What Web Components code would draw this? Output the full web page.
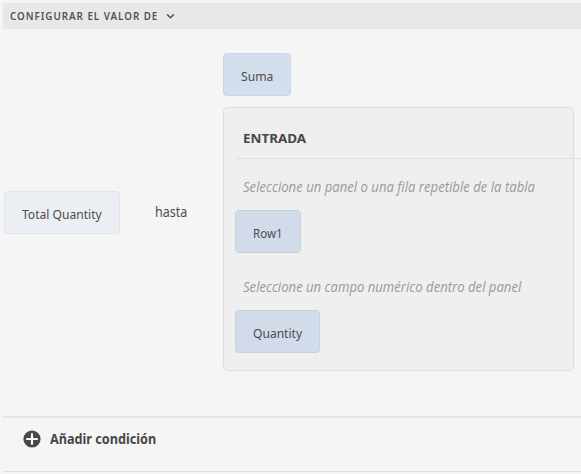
<!DOCTYPE html>
<html lang="es"><head><meta charset="utf-8"><title>Editor de reglas</title>
<style>html,body{margin:0;height:474px;overflow:hidden;background:#f5f5f5}</style></head>
<body><rule-editor></rule-editor>
<script>
const define = (name, html, after) => customElements.define(name, class extends HTMLElement {
  connectedCallback() {
    if (this.shadowRoot) return;
    this.attachShadow({mode: 'open'}).innerHTML = html;
    if (after) after(this);
  }
});

// A single line of text condensed to the given width.
define('fit-text', `<style>
:host{display:block;white-space:nowrap;flex:none}
span{display:inline-block;transform-origin:0 50%}</style><span><slot></slot></span>`, el => {
  const w = +el.getAttribute('width');
  el.style.width = w + 'px';
  const s = el.shadowRoot.querySelector('span');
  s.style.transform = `scaleX(${w / s.offsetWidth})`;
});

define('value-chip', `<style>
:host{display:flex;box-sizing:border-box;width:fit-content;height:43px;padding:3px 17px 0;align-items:center;
border:1px solid #c6d2e2;border-radius:4px;background:#d1dbea;color:#4c4c4e;font-size:13.3px;line-height:20px;flex:none}
:host([tone=function]){background:#d4dfee;border-color:#c9d6e6}
:host([tone=pale]){background:#ebeff4;border-color:#e0e5e9}</style><slot></slot>`);

define('rule-header', `<style>
:host{display:flex;box-sizing:border-box;margin-left:3px;height:26px;padding:0 0 1px 6.5px;align-items:center;background:#e8e8e8;
color:#535353;font-size:10px;font-weight:600;letter-spacing:1px;line-height:16px}
svg{margin-left:8px;margin-top:1px}</style>
<slot></slot><svg width="9" height="7" viewBox="0 0 9 7"><path d="M1.5 1.7 4.5 4.7 7.5 1.7" fill="none" stroke="#505050" stroke-width="1.5" stroke-linecap="round" stroke-linejoin="round"/></svg>`);

define('input-panel', `<style>
:host{display:flex;flex-direction:column;box-sizing:border-box;width:351px;height:264px;padding:0 0 0 11px;
border:1px solid #dedede;border-radius:5px;background:#efefef}
.title{box-sizing:border-box;width:347px;height:51px;padding:20px 0 0 8px;border-bottom:1px solid #e0e0e0;color:#474747;font-size:13px;font-weight:700;line-height:20px}
</style><div class="title"><slot name="title"></slot></div><slot></slot>`);

define('input-field', `<style>
:host{display:flex;flex-direction:column;height:100px}
.label{height:51px;box-sizing:border-box;padding:18px 0 0 8px;color:#999;font-family:"Open Sans","Noto Sans",sans-serif;font-size:14.4px;font-style:italic;line-height:20px}
</style><div class="label"><slot name="label"></slot></div><slot></slot>`);

define('add-condition', `<style>
:host{display:flex;box-sizing:border-box;margin-left:3px;height:56px;padding:0 0 11px 20px;align-items:center;gap:9px;
border-top:2px solid #e4e4e4;border-bottom:1px solid #e0e0e0;color:#474747;font-size:13.5px;font-weight:700;line-height:20px}
svg{flex:none}</style>
<svg width="18" height="18" viewBox="0 0 18 18"><circle cx="9" cy="9" r="8.6" fill="#474747"/><path d="M9 4v10M4 9h10" stroke="#f5f5f5" stroke-width="2.2" stroke-linecap="round"/></svg><slot></slot>`);

define('rule-editor', `<style>
:host{display:flex;flex-direction:column;box-sizing:border-box;width:581px;height:474px;padding-top:3px;background:#f5f5f5;
font-family:"Noto Sans","Open Sans",sans-serif}
.rule{display:grid;grid-template-columns:116px 103px 351px;height:387px;box-sizing:border-box;padding:24px 0 0 4px}
.left{padding-top:138px}.mid{padding:149px 0 0 35px;color:#4e4e4e;font-size:14.3px;line-height:20px}
.right{display:flex;flex-direction:column;gap:11px}</style>
<rule-header><fit-text width="148">CONFIGURAR EL VALOR DE</fit-text></rule-header>
<div class="rule">
<div class="left"><value-chip tone="pale"><fit-text width="80">Total Quantity</fit-text></value-chip></div>
<div class="mid"><fit-text width="32.5">hasta</fit-text></div>
<div class="right"><value-chip tone="function"><fit-text width="32">Suma</fit-text></value-chip>
<input-panel><fit-text slot="title" width="63">ENTRADA</fit-text>
<input-field><fit-text slot="label" width="292">Seleccione un panel o una fila repetible de la tabla</fit-text><value-chip><fit-text width="29.5">Row1</fit-text></value-chip></input-field>
<input-field><fit-text slot="label" width="278">Seleccione un campo numérico dentro del panel</fit-text><value-chip><fit-text width="49">Quantity</fit-text></value-chip></input-field>
</input-panel></div></div>
<add-condition><fit-text width="106">Añadir condición</fit-text></add-condition>`);
</script></body></html>
